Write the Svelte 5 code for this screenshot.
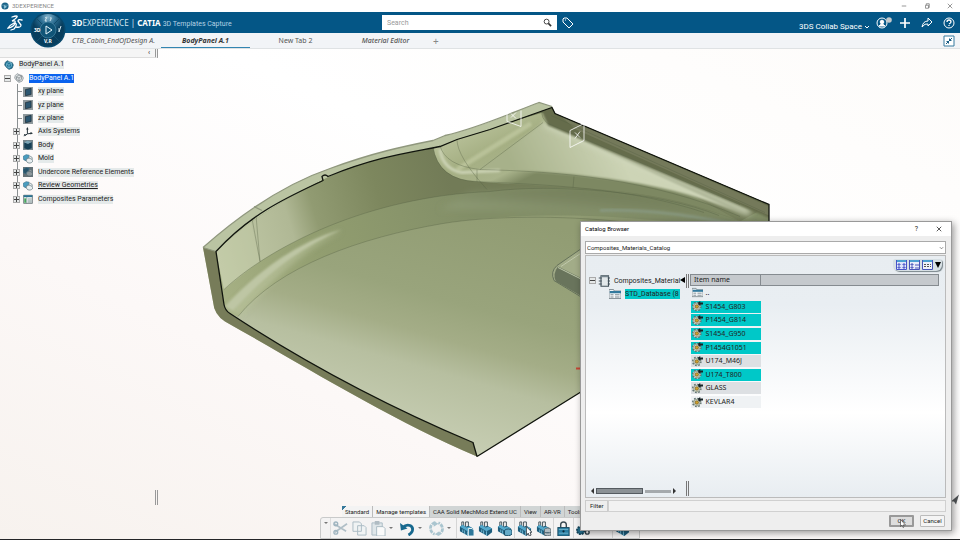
<script>
    const tabs = [
        { label: "CTB_Cabin_EndOfDesign A.", style: "italic" },
        { label: "BodyPanel A.1", style: "active" },
        { label: "New Tab 2", style: "" },
        { label: "Material Editor", style: "italic strong" },
    ];

    const features = [
        { label: "xy plane", icon: "plane" },
        { label: "yz plane", icon: "plane" },
        { label: "zx plane", icon: "plane" },
        { label: "Axis Systems", icon: "axis", more: true },
        { label: "Body", icon: "body", more: true },
        { label: "Mold", icon: "geoset", more: true },
        { label: "Undercore Reference Elements", icon: "geodark", more: true },
        { label: "Review Geometries", icon: "geoset", more: true, underline: true },
        { label: "Composites Parameters", icon: "params", more: true },
    ];

    const sections = ["Standard", "Manage templates", "CAA Solid MechMod Extend UC", "View", "AR-VR", "Tools"];

    const tools = [
        { name: "Cut", icon: "cut", off: true },
        { name: "Copy", icon: "copy", off: true },
        { name: "Paste", icon: "paste", off: true, menu: true },
        { name: "Undo", icon: "undo", menu: true },
        { name: "Update", icon: "update", off: true, menu: true, end: true },
        { name: "Power Copy", icon: "brickcopy" },
        { name: "User Feature", icon: "brick" },
        { name: "Save in Catalog", icon: "brickcatalog", end: true },
        { name: "Instantiate", icon: "brickcursor" },
        { name: "Template Data", icon: "brickdata", end: true },
        { name: "Lock", icon: "lock", end: true },
        { name: "Components", icon: "gears" },
        { name: "Document", icon: "doc", end: true },
        { name: "Template", icon: "brick" },
    ];

    let items = $state([
        { name: "S1454_G803", selected: true },
        { name: "P1454_G814", selected: true },
        { name: "S1454_G950", selected: true },
        { name: "P1454G1051", selected: true },
        { name: "U174_M46J", selected: false },
        { name: "U174_T800", selected: true },
        { name: "GLASS", selected: false },
        { name: "KEVLAR4", selected: false },
    ]);

    let activeSection = $state("Manage templates");
    let open = $state(true);
</script>

{#snippet icon(name)}
    <svg class="icon" viewBox="0 0 16 16" aria-hidden="true">
        {#if name === "plane"}
            <rect width="16" height="16" fill="#8f999d" />
            <path d="M4 4l9-2v10l-9 2z" fill="#2c5670" stroke="#17242d" />
        {:else if name === "axis"}
            <path d="M7 11V3M7 11l7-1M7 11l-4 3" stroke="#26343b" stroke-width="1.6" fill="none" />
            <path d="M5 4l2-4 2 4zM12 8l4 2-4 2zM5 12l-4 3 1-4z" fill="#26343b" />
        {:else if name === "body"}
            <rect width="16" height="16" fill="#76868d" />
            <path d="M2 4l6 2 6-3v10l-6 2-6-2z" fill="#164057" />
            <path d="M2 4l5-3 7 2-6 3z" fill="#7aa5b7" />
        {:else if name === "geoset" || name === "geodark"}
            {#if name === "geodark"}<rect width="16" height="16" fill="#667176" />{/if}
            <path d="M0 4l5-3 5 1-1 3-4 6-4-2z" fill={name === "geodark" ? "#28546a" : "#4a9dbf"} stroke="#39718b" />
            <path d="M5 9c0 7 9 7 11 2-3-5-8-5-11-2zM9 6c3-4 6-2 6 3" fill="#e8eff1" fill-opacity={name === "geodark" ? 0.3 : 1} stroke="#50666f" />
        {:else if name === "params"}
            <path d="M1 2h14v13H1z" fill="#edf3f1" stroke="#35454c" />
            <path d="M1 2h14v3H1z" fill="#287191" />
            <path d="M6 5v10M8 8h6M8 11h6M8 13h6" stroke="#657b80" />
            <path d="M2 7h3v7H2z" fill="#46a65c" />
        {:else if name === "part" || name === "product"}
            <path d="M2 4l3-3 4 2 4 1 2 4-2 5-5 2-4-3-3-4z" fill={name === "product" ? "#237596" : "#dde1e2"} stroke={name === "product" ? "#1e526a" : "#747c80"} />
            <path d="M4 6l4-3 4 2v5L8 13 4 10zM4 6l4 2 4-3M8 8v5" stroke={name === "product" ? "#89c6dc" : "#747c80"} fill="none" />
        {:else if name === "book"}
            <path d="M4 1h10v14H4z" fill="#e2e8ea" stroke="#42505a" stroke-width="1.5" />
            <path d="M1 4h4M1 8h4M1 12h4M13 4h3M13 8h3M13 12h3" stroke="#42505a" stroke-width="1.5" />
            <path d="M4 1h10v2H4z" fill="#78878f" />
        {:else if name === "folder"}
            <path d="M0 2h6l1 2h9v10H0z" fill="#f2f6f8" stroke="#67747c" />
            <path d="M1 4h15v3H1z" fill="#32799d" />
            <path d="M2 9h4M8 9h6M2 12h4M8 12h6" stroke="#5d6c74" />
        {:else if name === "gear"}
            <circle cx="7" cy="8" r="6" fill="#d2d8c9" stroke="#5d7070" stroke-width="2" stroke-dasharray="2.4 2.3" />
            <circle cx="7" cy="8" r="4.5" fill="#e4e7d6" stroke="#788479" />
            <circle cx="7" cy="8" r="2.5" fill="#d0a02b" stroke="#6c5924" />
            <path d="M9 2l3-2v2h4v3h-4v2L9 5z" fill="#182326" />
        {:else if name === "cut"}
            <path d="M1 3l13 8M2 12L15 3" stroke="#849dab" stroke-width="1.8" />
            <circle cx="3" cy="3" r="2" fill="none" stroke="#668b9e" stroke-width="1.5" />
            <circle cx="3" cy="12" r="2" fill="none" stroke="#668b9e" stroke-width="1.5" />
        {:else if name === "copy"}
            <path d="M1 1h7l2 2v8H1zM6 5h7l2 2v8H6z" fill="#eef3f5" stroke="#7895a4" />
        {:else if name === "paste"}
            <path d="M1 2h11v13H1z" fill="#d2dee3" stroke="#7895a4" />
            <path d="M4 0h5v4H4z" fill="#8499a4" />
            <path d="M6 6h7l2 2v8H6z" fill="#fff" stroke="#7895a4" />
        {:else if name === "undo"}
            <path d="M3 7c5-5 12-2 10 4-1 2-2 3-4 4" fill="none" stroke="#17688e" stroke-width="3" />
            <path d="M0 2l1 8 7-2z" fill="#17688e" />
        {:else if name === "update"}
            <path d="M7 2C0 2 0 12 6 14M9 14c7 0 7-10 1-12" fill="none" stroke="#79a7b8" stroke-width="3" stroke-dasharray="4 1" />
            <path d="M5 0l5 3-5 3zM11 11l-5 3 5 2z" fill="#79a7b8" />
        {:else if name === "lock"}
            <path d="M5 7V4c0-4 6-4 6 0v3" fill="none" stroke="#3b4b53" stroke-width="1.5" />
            <rect x="2" y="7" width="12" height="9" fill="#2a7ea2" stroke="#16475e" />
            <path d="M3 9h10M3 13h10" stroke="#6fb0ca" />
            <circle cx="8" cy="11" r="1.2" fill="#082838" />
        {:else if name === "gears"}
            <circle cx="5" cy="10" r="4" fill="#226b89" stroke="#154257" stroke-width="2" stroke-dasharray="2 1" />
            <circle cx="12" cy="12" r="2" fill="none" stroke="#33454d" stroke-width="1.5" />
        {:else if name === "doc"}
            <path d="M3 1h10v9H3z" fill="#eee" stroke="#8a969c" />
        {:else}
            <path d="M3 6V1h2v6M7 8V1h3v7" fill="none" stroke="#3f4f56" />
            <path d="M1 6l3-2 3 2 3-1 5 3v4l-5 4-9-5z" fill="#1d5d7c" />
            <path d="M1 6l8 5 6-3-4-2-3 1-4-3z" fill="#55a9cc" />
            <path d="M9 11v5M4 9v3M6 10v4" stroke="#79bed9" />
            {#if name === "brickcopy"}
                <path d="M10 8h4l2 2v6h-6z" fill="#2e789a" stroke="#e9f2f5" />
            {:else if name === "brickcatalog"}
                <path d="M8 10c2-2 6-2 8 0v4c-2 2-5 2-8 1z" fill="#65abc8" stroke="#174c64" />
            {:else if name === "brickcursor"}
                <path d="M10 6v9l2-2 1 3 2-1-1-3h2z" fill="#fff" stroke="#414a50" />
            {:else if name === "brickdata"}
                <path d="M9 9c1-2 6-2 7 0v6c-2 1-5 1-7 0zM9 12c2 1 5 1 7 0" fill="#b2bdc2" stroke="#57656c" />
            {/if}
        {/if}
    </svg>
{/snippet}

<div class="app">
    <svg class="scene" viewBox="0 0 960 540" preserveAspectRatio="xMidYMid slice" role="img" aria-label="Body panel model">
        <defs>
            <linearGradient id="floor" gradientUnits="userSpaceOnUse" x1="460" y1="200" x2="395" y2="430">
                <stop offset="0" stop-color="#919c73" />
                <stop offset=".42" stop-color="#99a47c" />
                <stop offset=".58" stop-color="#a4ad87" />
                <stop offset=".72" stop-color="#b7bfa0" />
                <stop offset="1" stop-color="#c6cdb2" />
            </linearGradient>
            <linearGradient id="wall" gradientUnits="userSpaceOnUse" x1="216" y1="250" x2="450" y2="180">
                <stop offset="0" stop-color="#c3cba9" />
                <stop offset=".32" stop-color="#b0b895" />
                <stop offset=".43" stop-color="#919b72" />
                <stop offset=".7" stop-color="#7d875e" />
                <stop offset="1" stop-color="#727b57" />
            </linearGradient>
            <linearGradient id="fillet" gradientUnits="userSpaceOnUse" x1="220" y1="300" x2="470" y2="200">
                <stop offset="0" stop-color="#a7b185" />
                <stop offset=".4" stop-color="#929e70" />
                <stop offset="1" stop-color="#828e67" />
            </linearGradient>
            <linearGradient id="pocket" gradientUnits="userSpaceOnUse" x1="480" y1="125" x2="510" y2="187">
                <stop offset="0" stop-color="#b7c098" />
                <stop offset=".4" stop-color="#a5af83" />
                <stop offset=".8" stop-color="#a9b38b" />
                <stop offset="1" stop-color="#7d8862" />
            </linearGradient>
            <linearGradient id="flat" gradientUnits="userSpaceOnUse" x1="520" y1="180" x2="610" y2="135">
                <stop offset="0" stop-color="#a7b18a" />
                <stop offset="1" stop-color="#cdd4b6" />
            </linearGradient>
            <linearGradient id="shade" gradientUnits="userSpaceOnUse" x1="600" y1="186" x2="596" y2="222">
                <stop offset="0" stop-color="#717c57" />
                <stop offset=".5" stop-color="#7b8662" />
                <stop offset="1" stop-color="#8c9973" />
            </linearGradient>
            <filter id="soft"><feGaussianBlur stdDeviation="3" /></filter>
            <filter id="softer"><feGaussianBlur stdDeviation="1" /></filter>
            <clipPath id="inside"><path d="M216 252C254 215 306 187 348 169C380 158 410 153 440 147L457 140L490 130L552 108L555 114L769 205V260L580 393L477 457L473 443C383 405 300 360 230 314Q225 311 224 305Z" /></clipPath>
        </defs>

        <path d="M203 248C245 211 289 183 330 169C374 153 403 147 433 141L445 136C480 128 512 113 539 103L552 107L555 114L769 205V260L580 393L477 457C390 420 302 365 225 322Q214 315 213 302Z" fill="#bac4a2" />
        <g clip-path="url(#inside)">
            <path d="M210 90h570v380H210z" fill="url(#floor)" />
            <path d="M223 312L238 317C278 267 360 238 443 224C492 216 560 214 620 218L780 230V100H400L210 220z" fill="url(#fillet)" />
            <path d="M216 252L224 290C270 247 368 197 490 192C570 184 650 188 740 222L780 200L550 98L400 140L250 190z" fill="url(#wall)" />
            <path d="M470 193C560 184 650 184 740 222L780 238C640 215 560 208 440 210z" fill="url(#shade)" filter="url(#soft)" />
            <path d="M226 310C268 272 304 240 343 231C300 251 270 284 240 317z" fill="#bac39d" filter="url(#soft)" opacity=".7" />
            <path d="M225 307C260 269 300 242 342 230C303 247 269 272 233 311z" fill="#bec6a4" filter="url(#softer)" />
            <path d="M433 147Q438 180 477 182C570 190 650 184 740 222L543 113L457 138z" fill="url(#pocket)" />
            <path d="M480 170L543 123L760 222C683 184 584 172 480 170z" fill="url(#flat)" filter="url(#softer)" />
            <path d="M545 123L750 213" stroke="#d0d7bc" stroke-width="7" filter="url(#soft)" />
            <path d="M541 110L556 108L775 203V221L719 197L548 126z" fill="#656c4b" filter="url(#softer)" />
            <path d="M560 116L769 207V216L576 130z" fill="#74795a" />
            <path d="M440 150Q443 170 462 173L500 171" fill="none" stroke="#ccd3b5" stroke-width="3" filter="url(#softer)" />
            <path d="M457 170L531 124" stroke="#ccd4ad" stroke-width="5" opacity=".5" filter="url(#softer)" />
            <path d="M600 211C650 209 695 217 742 226" fill="none" stroke="#8b9d89" stroke-width="3" opacity=".7" filter="url(#softer)" />
        </g>

        <path d="M203 248L216 252L224 305Q225 311 230 314C300 360 383 405 473 443L477 457C390 420 302 365 225 322Q214 315 213 302Z" fill="#777c59" />
        <path d="M216 252L250 219L260 262L224 290z" fill="#c3cba7" opacity=".35" />
        <path d="M224 290C270 247 368 197 490 192C550 184 657 191 719 216M238 317C278 267 360 238 443 224C492 216 560 216 620 222M252 219l8 43M256 216l4 46M433 147Q438 181 477 182C565 186 635 190 704 213M440 146Q445 166 480 170L543 123M457 140Q457 157 487 190M477 170v12M480 170C560 172 650 179 740 217M574 177l-1 11M542 111Q541 119 548 124L740 205M551 116L765 213" fill="none" stroke="#535e43" stroke-width=".7" opacity=".5" />
        <path d="M203 248C245 211 289 183 330 169C374 153 403 147 433 141L445 136C480 128 512 113 539 103L552 107M203 248l13 4M254 207l8 4" fill="none" stroke="#8f977d" stroke-width="1.3" />
        <path d="M580 250L557 266Q550 272 554 281L582 298V250z" fill="#a2ac88" stroke="#65715a" />
        <path d="M558 267L582 279V297L556 282Q552 275 558 267z" fill="#69745c" />
        <path d="M561 267L582 253M558 268L582 280" stroke="#bfc8ab" />
        <path d="M477 457L473 443C383 405 300 360 230 314Q225 311 224 305L216 252C252 213 289 197 323 181L322 177Q325 174 328 177C377 157 410 153 440 147L457 140L490 130L552 108L555 114L769 205V230M477 457L580 393L640 355" fill="none" stroke="#11150e" stroke-width="1.3" />
        <path d="M507 111v11l14 5v-16M511 114l5 5M516 113l-5 5M570 131l14-7v17l-14 7zM575 133l5 5M580 132l-5 7" fill="none" stroke="#fff" stroke-width=".8" />
        <path d="M576 369h4" stroke="#c64535" stroke-width="2" />
        <path d="M951 502l8-7-3 10-2-3z" fill="#535659" />
    </svg>

    <div class="titlebar">
        <svg class="globe" viewBox="0 0 10 10" aria-hidden="true"><circle cx="5" cy="5" r="4.5" fill="#1a6388" /><path d="M1 4h8M4 4l3 2-3 2z" fill="#8ecae1" stroke="#a4cedd" stroke-width=".5" /></svg>
        <span>3DEXPERIENCE</span>
        <div class="window-buttons">
            <button aria-label="Minimize"><svg viewBox="0 0 8 8"><path d="M1 4h6" /></svg></button>
            <button aria-label="Restore"><svg viewBox="0 0 8 8"><path d="M2 3h4v4H2zM3 3V1h4v5H6" /></svg></button>
            <button aria-label="Close window"><svg viewBox="0 0 8 8"><path d="M1 1l6 6M7 1L1 7" /></svg></button>
        </div>
    </div>

    <header>
        <svg class="logo" viewBox="0 0 16 16" aria-label="3DS" role="img"><path d="M5 2q6-2 5 0-1 2-5 4 4-1 3 2-1 4-7 5 2-3 6-5M15 5q-4-1-4 1l3 4q0 3-5 2M8 8q3 1-1 6l-3 1" fill="none" stroke="#fff" stroke-width="1.3" stroke-linecap="round" /></svg>
        <h1><b>3D</b>EXPERIENCE | <b>CATIA</b> <small>3D Templates Capture</small></h1>
        <div class="search">
            <input type="search" placeholder="Search" aria-label="Search" />
            <button aria-label="Run search"><svg viewBox="0 0 10 10"><circle cx="4" cy="4" r="2.7" /><path d="M6 6l3 3" stroke-width="1.8" /></svg></button>
        </div>
        <button class="tag" aria-label="Tags"><svg viewBox="0 0 12 12"><path d="M1 2v3l6 6 4-4-6-6H2zM3 3h1" /></svg></button>
        <div class="actions">
            <button class="space">3DS Collab Space <svg viewBox="0 0 6 4"><path d="M1 1l2 2 2-2" /></svg></button>
            <button class="round" aria-label="Profile"><svg viewBox="0 0 16 12"><circle cx="6" cy="6" r="5" /><circle cx="6" cy="5" r="1.8" fill="#fff" /><path d="M3 9q3-4 6 0z" fill="#fff" /><circle cx="13" cy="3" r="2.8" fill="#c3c9cc" stroke="none" /></svg></button>
            <button class="round" aria-label="Add"><svg viewBox="0 0 12 12"><path d="M6 1v10M1 6h10" stroke-width="1.7" /></svg></button>
            <button class="round" aria-label="Share"><svg viewBox="0 0 12 12"><path d="M1 10q1-6 6-6V1l4 4-4 4V7q-3-1-6 3z" /></svg></button>
            <button class="round" aria-label="Help"><svg viewBox="0 0 12 12"><circle cx="6" cy="6" r="5" /><path d="M4 5q0-2 2-2t2 2Q8 6 6 7M6 8v1" stroke-width="1.3" /></svg></button>
        </div>
    </header>

    <button class="compass" aria-label="Compass">
        <svg viewBox="0 0 36 36">
            <defs><radialGradient id="ball" cy=".1"><stop stop-color="#85b4cc" /><stop offset=".5" stop-color="#2a6c91" /><stop offset="1" stop-color="#073d5d" /></radialGradient></defs>
            <circle cx="18" cy="18" r="17.5" fill="#07476b" />
            <circle cx="18" cy="18" r="16" fill="url(#ball)" />
            <path d="M6 6l24 24M30 6L6 30" stroke="#124c6a" stroke-width="1" />
            <circle cx="18" cy="18" r="8" fill="#105477" stroke="#4b88a6" stroke-width=".7" />
            <path d="M16 14l6 4-6 4z" fill="none" stroke="#e8f6fc" />
            <path d="M15 6q3-2 1 1l-1 2h2M20 6q2-1 1 1l-1 2M29 16v4M31 14l-2 6" fill="none" stroke="#d0e5ed" />
            <text x="4" y="20">3D</text><text x="14" y="31">V,R</text>
        </svg>
    </button>

    <nav>
        {#each tabs as tab}
            <a href="#tab" class={tab.style}><span>{tab.label}</span></a>
        {/each}
        <button class="new" aria-label="New tab">+</button>
        <button class="shrink" aria-label="Collapse"><svg viewBox="0 0 12 12"><path d="M1 1h10v10H1z" fill="#fff" stroke="#367a9f" /><path d="M3 9l2-2M9 3L7 5" stroke="#185d84" /><path d="M3 6h3v3zM6 3v3h3z" fill="#185d84" /></svg></button>
    </nav>

    <main>
        <aside>
            <div class="panelbar"><button aria-label="Hide tree">‹</button></div>
            <ul class="tree">
                <li class="root">{@render icon("product")}<span>BodyPanel A.1</span></li>
                <li class="part"><i class="box minus"></i>{@render icon("part")}<span class="chosen">BodyPanel A.1</span></li>
                {#each features as feature}
                    <li>
                        <i class:box={feature.more} class:line={!feature.more}></i>
                        {@render icon(feature.icon)}
                        <span class:underline={feature.underline}>{feature.label}</span>
                    </li>
                {/each}
            </ul>
            <i class="grip"></i>
        </aside>

        <section class="toolbar">
            <div class="sections">
                {#each sections as section}
                    <button class:on={section === activeSection || section === "Standard"} onclick={() => (activeSection = section)}>{section}</button>
                {/each}
            </div>
            <div class="tools">
                <button class="chevron" aria-label="Options"><i class="caret"></i></button>
                {#each tools as tool}
                    <button class:off={tool.off} class:end={tool.end} aria-label={tool.name}>
                        {@render icon(tool.icon)}
                        {#if tool.menu}<i class="caret"></i>{/if}
                    </button>
                {/each}
            </div>
        </section>
    </main>

    {#if open}
        <div class="dialog" role="dialog" aria-label="Catalog Browser">
            <div class="caption">
                <h2>Catalog Browser</h2>
                <button aria-label="Help on catalog">?</button>
                <button aria-label="Close" onclick={() => (open = false)}><svg viewBox="0 0 8 8"><path d="M1 1l6 6M7 1L1 7" stroke="#222" /></svg></button>
            </div>
            <div class="combo">
                <select aria-label="Catalog"><option>Composites_Materials_Catalog</option></select>
                <svg viewBox="0 0 6 4" aria-hidden="true"><path d="M1 1l2 2 2-2" fill="none" stroke="#555" stroke-width=".8" /></svg>
            </div>
            <div class="content">
                <div class="views">
                    <button aria-label="Large icons"><svg viewBox="0 0 11 10"><path d="M0 0h11v10H0z" fill="#dfe5fa" /><path d="M0 1h11" stroke="#4ba0d1" stroke-width="2" /><path d="M2 4h2v1H2zM7 4h2v1H7zM2 7h2v1H2zM7 7h2v1H7zM.5 0v9.500h10V0" fill="none" stroke="#4854c8" /></svg></button>
                    <button aria-label="List"><svg viewBox="0 0 11 10"><path d="M0 0h11v10H0z" fill="#e8edfa" /><path d="M0 1h11" stroke="#4ba0d1" stroke-width="2" /><path d="M2 4h2v1H2zM2 7h2v1H2zM6 5h4M6 8h4M.5 0v9.500h10V0" fill="none" stroke="#4854b8" /></svg></button>
                    <button aria-label="Details"><svg viewBox="0 0 11 10"><path d="M0 0h11v10H0z" fill="#eef1fa" /><path d="M0 1h11" stroke="#4ba0d1" stroke-width="2" /><path d="M2 4.500h7M2 6.500h7" stroke="#555" stroke-dasharray="2 1" /><path d="M.5 0v9.500h10V0" fill="none" stroke="#4854b8" /></svg></button>
                    <button class="drop" aria-label="View menu"><svg viewBox="0 0 6 8"><path d="M0 1h6L3 7z" fill="#000" /></svg></button>
                </div>
                <div class="panes">
                    <div class="folders">
                        <ul>
                            <li><i class="box minus"></i>{@render icon("book")}<span>Composites_Material</span></li>
                            <li class="sub">{@render icon("folder")}<span class="picked">STD_Database (8</span></li>
                        </ul>
                        <div class="scroll"><i class="left"></i><b></b><em></em><i class="right"></i></div>
                    </div>
                    <div class="split"><i class="fold"></i></div>
                    <table>
                        <thead><tr><th>Item name</th><th></th></tr></thead>
                        <tbody>
                            <tr><td><div>{@render icon("folder")}..</div></td><td></td></tr>
                            {#each items as item}
                                <tr class:selected={item.selected} onclick={() => (item.selected = !item.selected)}>
                                    <td><div>{@render icon("gear")}{item.name}</div></td><td></td>
                                </tr>
                            {/each}
                        </tbody>
                    </table>
                </div>
            </div>
            <div class="filter"><label for="filter">Filter</label><input id="filter" type="text" /></div>
            <div class="buttons">
                <button class="ok" onclick={() => (open = false)}>OK
                    <svg class="cursor" viewBox="0 0 6 9" aria-hidden="true"><path d="M.5.5v7l1.500-1.500L3 8.500l1-.5-1-2h2.500z" fill="#fff" stroke="#333" stroke-width=".6" /></svg>
                </button>
                <button onclick={() => (open = false)}>Cancel</button>
            </div>
        </div>
    {/if}
</div>

<style>
    :global(body) {
        background: #fdfbfa;
    }

    .app {
        position: relative;
        display: flex;
        flex-direction: column;
        min-height: 100vh;
        box-sizing: border-box;
        overflow: hidden;
        border-bottom: 1px solid #242527;
        background: linear-gradient(25deg, #f7f2ee 0%, #fcf8f7 30%, #fff 60%, #fdfbf9 100%);
        font: 7px/10px Roboto, "Noto Sans", sans-serif;
        color: #222;
    }
    button, input, select {
        font: inherit;
        color: inherit;
        padding: 0;
        margin: 0;
        border: 0;
        background: none;
        box-sizing: border-box;
    }
    svg {
        display: block;
    }
    ul {
        list-style: none;
        margin: 0;
        padding: 0;
    }
    .icon {
        width: 10px;
        height: 10px;
        flex: none;
    }
    .scene {
        position: absolute;
        inset: 0;
        width: 100%;
        height: 100%;
    }

    /* window frame */
    .titlebar, header, nav, main {
        position: relative;
    }
    .titlebar {
        display: flex;
        align-items: center;
        height: 12px;
        padding: 0 7px 0 1px;
        gap: 3px;
        background: #fff;
        color: #888;
        font-size: 6px;
        box-sizing: border-box;
    }
    .globe {
        width: 8px;
        height: 8px;
    }
    .window-buttons {
        display: flex;
        gap: 17px;
        margin-left: auto;
    }
    .window-buttons svg {
        width: 6px;
        height: 6px;
        fill: none;
        stroke: #777;
    }
    header {
        display: flex;
        align-items: center;
        height: 21px;
        padding: 0 5px 0 7px;
        background: #045686;
        color: #fff;
    }
    .logo {
        width: 16px;
        height: 16px;
    }
    h1 {
        flex: 0 0 359px;
        box-sizing: border-box;
        padding-left: 49px;
        margin: 0;
        font: 8px/12px "Noto Sans", sans-serif;
        white-space: nowrap;
        color: #d9e8f1;
    }
    h1 b {
        color: #fff;
    }
    h1 small {
        font: 7px Roboto, sans-serif;
        color: #b5d2e4;
    }
    .search {
        display: flex;
        align-items: center;
        flex: 0 1 175px;
        height: 15px;
        background: #fff;
    }
    .search input {
        flex: 1;
        min-width: 0;
        padding-left: 5px;
        color: #555;
        outline: none;
    }
    .search input::placeholder {
        color: #999;
    }
    .search svg {
        width: 9px;
        height: 9px;
        margin-right: 5px;
        fill: none;
        stroke: #333;
    }
    header svg {
        fill: none;
        stroke: #fff;
    }
    .tag svg {
        width: 12px;
        height: 12px;
        margin-left: 5px;
    }
    .actions {
        display: flex;
        align-items: center;
        gap: 10px;
        margin-left: auto;
    }
    .actions .space {
        display: flex;
        align-items: center;
        gap: 2px;
        padding-top: 8px;
        margin-right: -4px;
        font-size: 8px;
        white-space: nowrap;
    }
    .space svg {
        width: 6px;
        height: 4px;
    }
    .round svg {
        width: 12px;
        height: 12px;
    }
    .round:nth-child(2) svg {
        width: 16px;
        margin-right: -3px;
    }
    .compass {
        position: absolute;
        z-index: 2;
        left: 30px;
        top: 12px;
    }
    .compass svg {
        width: 36px;
        height: 36px;
    }
    .compass text {
        fill: #fff;
        font: bold 5px "Noto Sans", sans-serif;
    }
    nav {
        display: grid;
        grid-template-columns: 89px 89px 91px 89px auto 1fr;
        padding: 0 5px 0 72px;
        height: 16px;
        align-items: center;
        box-sizing: border-box;
        background: #f2f4f7;
        border-bottom: 1px solid #dfe2e4;
        color: #555;
        font-family: "Noto Sans", sans-serif;
    }
    nav a {
        color: inherit;
        text-decoration: none;
        text-align: center;
        white-space: nowrap;
        line-height: 15px;
    }
    nav a:first-child {
        text-align: left;
    }
    .italic {
        font-style: italic;
    }
    .strong {
        font-weight: 500;
    }
    .active {
        font-weight: bold;
        font-style: italic;
        color: #333;
        box-shadow: inset 0 -1px #3285b1;
    }
    .new {
        color: #888;
        font-size: 10px;
        padding-left: 3px;
    }
    .shrink {
        justify-self: end;
    }
    .shrink svg {
        width: 12px;
        height: 12px;
    }

    /* feature tree */
    main {
        flex: 1;
        display: flex;
    }
    aside {
        position: relative;
        width: 158px;
        box-sizing: border-box;
    }
    .panelbar {
        display: flex;
        justify-content: flex-end;
        height: 9px;
        box-sizing: border-box;
        padding-right: 5px;
        border-right: 3px double #999;
        border-bottom: 1px solid #ddd;
        background: #f5f5f5;
        line-height: 7px;
    }
    .grip {
        position: absolute;
        right: 0;
        bottom: 34px;
        height: 15px;
        width: 1px;
        border: solid #999;
        border-width: 0 1px;
    }
    .tree {
        position: relative;
        display: grid;
        grid-auto-rows: 1fr;
        height: 148px;
    }
    .tree::before {
        content: "";
        position: absolute;
        left: 17px;
        top: 26px;
        bottom: 7px;
        border-left: 1px solid #8b9092;
    }
    .tree li {
        position: relative;
        display: flex;
        align-items: center;
        padding-left: 13px;
        white-space: nowrap;
    }
    .tree .root, .tree .part {
        padding-left: 4px;
    }
    .tree span {
        margin-left: 5px;
        line-height: 9px;
        background: #e5eaea;
    }
    .tree .chosen {
        background: #0a62ee;
        color: #fff;
    }
    .tree .underline {
        text-decoration: underline;
    }
    .box {
        position: relative;
        width: 7px;
        height: 7px;
        margin-right: 3px;
        flex: none;
        box-sizing: border-box;
        border: 1px solid #aaa;
        background:
            linear-gradient(#444, #444) center / 5px 1px no-repeat,
            linear-gradient(#444, #444) center / 1px 5px no-repeat,
            #e5e8e8;
    }
    .box.minus {
        background:
            linear-gradient(#444, #444) center / 5px 1px no-repeat,
            #e5e8e8;
    }
    .line {
        width: 5px;
        margin: 0 1px 0 4px;
        border-top: 1px solid #8b9092;
    }

    /* bottom toolbar */
    .toolbar {
        position: absolute;
        bottom: 0;
        left: 50%;
        width: 320px;
        transform: translateX(-50%);
    }
    .sections {
        display: flex;
        margin: 0 48px 0 22px;
        height: 11px;
        font-size: 6px;
        background: #d1d5d5;
    }
    .sections button {
        padding: 0 3px;
        border-right: 1px solid #bbb;
        white-space: nowrap;
    }
    .sections .on {
        background: #f3f3f3;
    }
    .sections button:first-child {
        background: linear-gradient(135deg, #37799b 3px, #f3f3f3 3px);
    }
    .sections button:last-child {
        border: 0;
    }
    .tools {
        display: flex;
        align-items: center;
        height: 22px;
        box-sizing: border-box;
        border: 1px solid #c9caca;
        border-radius: 3px 3px 0 0;
        background: #f4f3f3;
    }
    .tools button {
        display: flex;
        align-items: center;
        height: 20px;
        padding: 0 2px;
    }
    .tools .chevron {
        width: 10px;
        padding: 4px 0;
        border-right: 1px solid #ddd;
        align-items: flex-start;
    }
    .tools .icon {
        width: 15px;
        height: 15px;
    }
    .tools .off .icon {
        opacity: 0.6;
    }
    .tools .end {
        border-right: 1px solid #d5d5d5;
    }
    .caret {
        margin: 0 3px;
        border: 2px solid transparent;
        border-top-color: #777;
        border-bottom: 0;
    }

    /* catalog browser */
    .dialog {
        position: absolute;
        right: 8px;
        bottom: 8px;
        z-index: 3;
        width: 372px;
        height: 310px;
        display: flex;
        flex-direction: column;
        box-sizing: border-box;
        border: 1px solid #999;
        background: #eee;
        box-shadow: 2px 2px 7px #0006;
    }
    .caption {
        display: flex;
        align-items: center;
        height: 14px;
        padding: 0 9px 0 4px;
        gap: 18px;
        background: #fff;
    }
    h2 {
        flex: 1;
        margin: 0;
        font-size: 6px;
        font-weight: normal;
        color: #000;
    }
    .caption svg {
        width: 6px;
        height: 6px;
    }
    .combo {
        position: relative;
        margin: 5px 5px 1px 4px;
    }
    .combo select {
        display: block;
        appearance: none;
        width: 100%;
        height: 13px;
        padding-left: 1px;
        border: 1px solid #aaa;
        background: #fff;
        font-size: 6px;
    }
    .combo svg {
        position: absolute;
        right: 2px;
        top: 5px;
        width: 5px;
        height: 4px;
    }
    .content {
        flex: 1;
        min-height: 0;
        display: flex;
        flex-direction: column;
        margin: 0 5px 2px 4px;
        border: 1px solid #bbb;
        background: linear-gradient(#e8edf1, #e9eef2 20%, #fff 65%, #e8edf1);
    }
    .views {
        display: flex;
        align-self: flex-end;
        align-items: center;
        gap: 2px;
        height: 12px;
        margin: 3px 3px 3px 0;
        padding: 0 1px 0 3px;
        box-sizing: border-box;
        border-radius: 3px 3px 6px 6px;
        background: #d7e0e4;
        box-shadow: 1px 1px 1px #78848a;
    }
    .views svg {
        width: 11px;
        height: 10px;
    }
    .views .drop svg {
        width: 6px;
        height: 8px;
    }
    .panes {
        flex: 1;
        min-height: 0;
        display: flex;
        align-items: flex-start;
        padding: 0 6px 1px 3px;
    }
    .folders {
        display: flex;
        flex-direction: column;
        align-self: stretch;
        width: 91px;
    }
    .folders li {
        display: flex;
        align-items: center;
        height: 13px;
        white-space: nowrap;
    }
    .folders .icon {
        width: 12px;
        height: 12px;
    }
    .folders .box {
        margin-right: 2px;
    }
    .folders span {
        margin-left: 4px;
    }
    .folders .sub {
        padding-left: 20px;
    }
    .folders .picked {
        flex: 1;
        background: #00c8c8;
    }
    .scroll {
        display: flex;
        align-items: center;
        gap: 2px;
        margin: auto 4px 1px 2px;
        height: 8px;
    }
    .scroll b {
        width: 47px;
        height: 6px;
        box-sizing: border-box;
        border: 1px solid #555b60;
        background: #8b9195;
    }
    .scroll em {
        flex: 1;
        height: 3px;
        background: #a5a9ac;
    }
    .scroll .left, .scroll .right {
        border: solid transparent;
        border-width: 3px 3px 3px 0;
        border-right-color: #333;
    }
    .scroll .right {
        border-width: 3px 0 3px 3px;
        border-left-color: #333;
    }
    .split {
        position: relative;
        align-self: stretch;
        width: 10px;
        background:
            linear-gradient(#777, #777) 6px 0 / 1px 14px no-repeat,
            linear-gradient(#777, #777) 8px 0 / 1px 14px no-repeat,
            linear-gradient(#777, #777) 6px 100% / 1px 15px no-repeat,
            linear-gradient(#777, #777) 8px 100% / 1px 15px no-repeat;
    }
    .fold {
        display: block;
        width: 0;
        margin-top: 3px;
        border: 3px solid transparent;
        border-width: 3px 5px 3px 0;
        border-right-color: #000;
    }
    table {
        flex: 1;
        height: 135px;
        border-collapse: collapse;
        table-layout: fixed;
    }
    th, td {
        padding: 0;
        text-align: left;
        font-weight: normal;
        font-family: "Noto Sans", sans-serif;
    }
    th {
        border: 1px solid #858b90;
        background: #c5c9cd;
        padding-left: 3px;
        box-sizing: border-box;
    }
    th:first-child {
        width: 70px;
    }
    td div {
        display: flex;
        align-items: center;
        gap: 3px;
        height: 12px;
        padding-left: 1px;
    }
    td .icon {
        width: 11px;
        height: 11px;
    }
    tbody tr:nth-child(even) td:first-child div {
        background: #dde0e3;
    }
    tbody tr:last-child td:first-child div {
        background: #eff2f4;
    }
    tbody tr.selected td:first-child div {
        background: #00c8c8;
    }
    .filter {
        display: flex;
        height: 12px;
        margin: 0 5px 3px 4px;
        font-size: 6px;
    }
    .filter label {
        padding: 0 4px;
        border: 1px solid #ccc;
    }
    .filter input {
        flex: 1;
        border: 1px solid #d0d0d0;
        background: #f2f2f2;
    }
    .buttons {
        display: flex;
        justify-content: flex-end;
        gap: 6px;
        padding: 0 6px 3px 0;
    }
    .buttons button {
        position: relative;
        width: 25px;
        height: 12px;
        border: 1px solid #bbb;
        border-radius: 1px;
        font-size: 6px;
        background: #f4f4f4;
    }
    .buttons .ok {
        border: 2px solid #999;
        background: #ddd;
        line-height: 8px;
    }
    .cursor {
        position: absolute;
        left: 9px;
        top: 2px;
        width: 6px;
        height: 9px;
    }
</style>
